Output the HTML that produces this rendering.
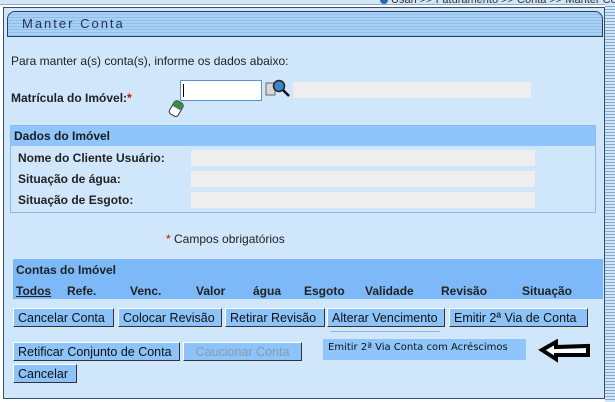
<!DOCTYPE html>
<html><head><meta charset="utf-8"><style>
body{margin:0;width:615px;height:402px;overflow:hidden;background:#fff;font-family:"Liberation Sans",Arial,sans-serif;font-size:12px;position:relative}
.a{position:absolute}
.panel{left:3px;top:7px;width:600px;height:390px;background:#cfe6fb;border:1px solid #34506e}
.right{left:605px;top:4px;width:10px;height:398px;background:repeating-linear-gradient(#cfe6fb 0 2px,#8aa9c8 2px 3px)}
.title{left:7px;top:11px;width:594px;height:24px;border:1px solid #2c3e57;border-radius:8px 8px 0 0;background:repeating-linear-gradient(#a9d0f5 0 2px,#8fbbe8 2px 3px);color:#1e3550;letter-spacing:2px;font-size:13px;line-height:24px;text-indent:14px}
.in{background:#eeeeee;height:16px}
.btn{background:#8cc3f8;border:1px solid #fff;border-right-color:#333;border-bottom-color:#333;height:19px;line-height:19px;font-size:12.5px;color:#111;padding:0 4px;box-sizing:border-box;white-space:nowrap;overflow:hidden}
.lbl{font-weight:bold;font-size:12px;color:#222}
</style></head><body>
<div class="a" style="left:0;top:0;width:615px;height:4px;background:#cfe6fb;border-bottom:1px solid #9ab"></div>
<div class="a" style="left:380px;top:-6px;font-size:11px;color:#333;white-space:nowrap"><span style="display:inline-block;width:8px;height:8px;border-radius:50%;background:#2a64b8;vertical-align:middle"></span> Usah >> Faturamento >> Conta >> Manter Conta</div>
<div class="a right"></div>
<div class="a panel"></div>
<div class="a title">Manter Conta</div>
<div class="a" style="left:11px;top:54px;font-size:12px;color:#222">Para manter a(s) conta(s), informe os dados abaixo:</div>
<div class="a lbl" style="left:11px;top:91px">Matrícula do Imóvel:<span style="color:#d00">*</span></div>
<div class="a" style="left:180px;top:80px;width:80px;height:19px;background:#fff;border:1px solid #5b8fd0"><div style="margin:3px 0 0 2px;width:1px;height:13px;background:#000"></div></div>
<svg class="a" style="left:265px;top:78px" width="26" height="20"><rect x="1" y="5" width="9" height="12" fill="#d8d8d8" stroke="#666"/><circle cx="14" cy="8" r="5.5" fill="#3c86c8" stroke="#222" stroke-width="1.5"/><line x1="18" y1="12" x2="24" y2="18" stroke="#111" stroke-width="2.5"/></svg>
<div class="a in" style="left:293px;top:82px;width:238px"></div>
<svg class="a" style="left:167px;top:100px" width="18" height="18"><g transform="rotate(30 9 9)"><rect x="4" y="1" width="10" height="15" rx="3" fill="#fff" stroke="#333"/><rect x="4" y="1" width="10" height="7" rx="2" fill="#3d8a4a"/></g></svg>
<div class="a" style="left:10px;top:125px;width:584px;height:86px;border:1px solid #89bdf0"></div>
<div class="a" style="left:11px;top:126px;width:584px;height:20px;background:#8ec6fb;line-height:20px;text-indent:3px;font-weight:bold;color:#1a1a1a">Dados do Imóvel</div>
<div class="a lbl" style="left:18px;top:151px">Nome do Cliente Usuário:</div>
<div class="a in" style="left:191px;top:150px;width:344px"></div>
<div class="a lbl" style="left:18px;top:172px">Situação de água:</div>
<div class="a in" style="left:191px;top:171px;width:344px"></div>
<div class="a lbl" style="left:18px;top:193px">Situação de Esgoto:</div>
<div class="a in" style="left:191px;top:192px;width:344px"></div>
<div class="a" style="left:166px;top:232px;color:#222"><span style="color:#d00">*</span> Campos obrigatórios</div>
<div class="a" style="left:13px;top:259px;width:590px;height:40px;background:#7db9f8"></div>
<div class="a lbl" style="left:16px;top:263px">Contas do Imóvel</div>
<div class="a lbl" style="left:16px;top:284px;width:600px">
<span class="a" style="left:0;text-decoration:underline">Todos</span><span class="a" style="left:51px">Refe.</span><span class="a" style="left:114px">Venc.</span><span class="a" style="left:180px">Valor</span><span class="a" style="left:237px">água</span><span class="a" style="left:288px">Esgoto</span><span class="a" style="left:349px">Validade</span><span class="a" style="left:425px">Revisão</span><span class="a" style="left:506px">Situação</span></div>
<div class="a btn" style="left:13px;top:308px;width:101px">Cancelar Conta</div>
<div class="a btn" style="left:118px;top:308px;width:104px">Colocar Revisão</div>
<div class="a btn" style="left:225px;top:308px;width:100px">Retirar Revisão</div>
<div class="a btn" style="left:327px;top:308px;width:118px">Alterar Vencimento</div>
<div class="a btn" style="left:449px;top:308px;width:139px">Emitir 2ª Via de Conta</div>
<div class="a" style="left:330px;top:331px;width:110px;height:1px;background:#8ab8e0"></div>
<div class="a btn" style="left:13px;top:342px;width:167px">Retificar Conjunto de Conta</div>
<div class="a btn" style="left:183px;top:342px;width:119px;color:#8a9aaa;text-align:center">Caucionar Conta</div>
<div class="a" style="left:323px;top:339px;width:203px;height:21px;background:#8ec6fb;font-family:'DejaVu Sans',sans-serif;font-size:10px;line-height:18px;text-indent:5px;color:#111">Emitir 2ª Via Conta com Acréscimos</div>
<svg class="a" style="left:538px;top:339px" width="56" height="24"><path d="M4 11 L18 3 L18 8 L50 7 L50 16 L18 16 L18 20 Z" fill="#fff" stroke="#000" stroke-width="4" stroke-linejoin="miter"/></svg>
<div class="a btn" style="left:13px;top:364px;width:64px">Cancelar</div>
</body></html>
